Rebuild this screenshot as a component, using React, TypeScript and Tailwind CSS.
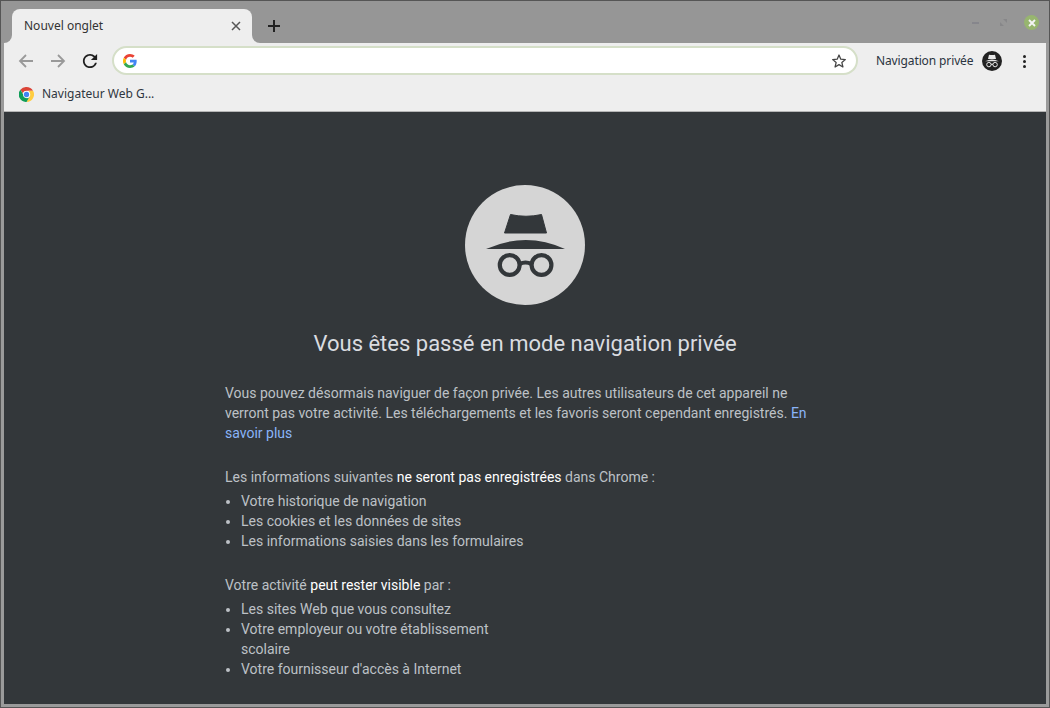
const G = () => (
  <svg width="14" height="14" viewBox="0 0 48 48">
    <path fill="#EA4335" d="M24 9.500c3.500 0 6.700 1.200 9.200 3.600l6.900-6.900C35.900 2.400 30.400 0 24 0 14.600 0 6.500 5.400 2.600 13.200l8 6.200C12.500 13.600 17.800 9.500 24 9.500z"/>
    <path fill="#4285F4" d="M46.900 24.500c0-1.600-.1-3.100-.4-4.500H24v9h12.900c-.6 3-2.200 5.500-4.700 7.200l7.700 6c4.500-4.200 7-10.300 7-17.700z"/>
    <path fill="#FBBC05" d="M10.600 28.600c-.5-1.500-.8-3-.8-4.600s.3-3.100.8-4.600l-8-6.200C.9 16.500 0 20.100 0 24s.9 7.500 2.600 10.800l8-6.200z"/>
    <path fill="#34A853" d="M24 48c6.500 0 11.900-2.100 15.900-5.800l-7.700-6c-2.100 1.400-4.900 2.300-8.200 2.300-6.200 0-11.500-4.200-13.400-9.900l-8 6.200C6.500 42.600 14.600 48 24 48z"/>
  </svg>
);

const ChromeLogo = () => (
  <svg width="15" height="15" viewBox="0 0 48 48" className="shrink-0">
    <path fill="#DB4437" d="M24 0a24 24 0 0 1 20.800 12H24a12 12 0 0 0-11.600 8.900L4.500 8.900A24 24 0 0 1 24 0z"/>
    <path fill="#FFCD40" d="M44.800 12A24 24 0 0 1 24 48l10.400-18A12 12 0 0 0 32 15.500V12z"/>
    <path fill="#0F9D58" d="M4.500 8.900l8.900 15.100L24 36a12 12 0 0 0 10.400-6L24 48A24 24 0 0 1 4.500 8.900z"/>
    <circle cx="24" cy="24" r="11" fill="#fff"/>
    <circle cx="24" cy="24" r="8.500" fill="#4285F4"/>
  </svg>
);

const Spy = ({ color }: { color: string }) => (
  <svg viewBox="0 0 120 120" className="w-full h-full">
    <path fill={color} stroke={color} strokeWidth="1" strokeLinejoin="round" d="M45.500 29.500 Q61 33 76.500 29.500 L81.500 48 L39.500 48 Z"/>
    <path fill={color} d="M21 64 Q61 46 100 64 Z"/>
    <g fill="none" stroke={color} strokeWidth="4.200">
      <circle cx="44.700" cy="80" r="9.900"/>
      <circle cx="76.500" cy="80" r="9.900"/>
      <path d="M54.500 79 Q60.500 76 66.500 79"/>
    </g>
  </svg>
);

const SpySmall = () => (
  <svg viewBox="0 0 20 20" width="20" height="20" className="shrink-0">
    <circle cx="10" cy="10" r="10" fill="#222222"/>
    <path fill="#e8e8e8" d="M7 3.700 Q10 4.400 13 3.700 L14 8 H6 Z"/>
    <path fill="#e8e8e8" d="M3.200 10.200 Q10 6.800 16.800 10.200 Z"/>
    <g fill="none" stroke="#e8e8e8" strokeWidth="1">
      <circle cx="6.900" cy="13.600" r="2.200"/>
      <circle cx="13.100" cy="13.600" r="2.200"/>
      <path d="M9 13.300 H11"/>
    </g>
  </svg>
);

export default function App() {
  return (
    <div className="w-[1050px] h-[708px] bg-[#9a9a9a] border border-[#555] flex flex-col overflow-hidden px-[3px] pb-[3px]" style={{ fontFamily: "'Noto Sans', sans-serif" }}>
      <div className="h-[42px] -mx-[3px] bg-[#969696] flex items-end pl-[11px] shrink-0 relative">
        <div className="relative w-[240px] h-[34px] bg-[#eeeeee] rounded-t-[8px] flex items-center pl-[12px] pr-[11px] justify-between text-[12px] text-[#333]">
          <div className="absolute -left-[8px] bottom-0 w-[8px] h-[8px] bg-[#eeeeee]"><div className="w-full h-full bg-[#969696] rounded-br-[8px]" /></div>
          <div className="absolute -right-[8px] bottom-0 w-[8px] h-[8px] bg-[#eeeeee]"><div className="w-full h-full bg-[#969696] rounded-bl-[8px]" /></div>
          <span>Nouvel onglet</span>
          <svg width="10" height="10" viewBox="0 0 10 10"><path d="M1 1 L9 9 M9 1 L1 9" stroke="#555" strokeWidth="1.500"/></svg>
        </div>
        <svg className="ml-[15px] mb-[10px]" width="14" height="14" viewBox="0 0 14 14"><path d="M7 1 V13 M1 7 H13" stroke="#222" strokeWidth="2"/></svg>
        <div className="absolute right-[10px] top-[14px] flex items-center">
          <div className="w-[7px] h-[2px] bg-[#86868c]" />
          <svg className="ml-[21px]" width="7" height="7" viewBox="0 0 7 7"><path d="M3 0 H7 V4 Z M0 3 L4 7 H0 Z" fill="#878789"/></svg>
          <div className="ml-[17px] w-[15px] h-[15px] rounded-full bg-[#97b56f] flex items-center justify-center">
            <svg width="8" height="8" viewBox="0 0 8 8"><path d="M1 1 L7 7 M7 1 L1 7" stroke="#f4f4f4" strokeWidth="1.900"/></svg>
          </div>
        </div>
      </div>

      <div className="h-[36px] bg-[#eeeeee] flex items-center pl-[14px] shrink-0">
        <svg width="16" height="16" viewBox="0 0 16 16" className="shrink-0"><path d="M15 8 H2 M8 2 L2 8 L8 14" fill="none" stroke="#999" strokeWidth="1.800"/></svg>
        <svg width="16" height="16" viewBox="0 0 16 16" className="ml-[16px] shrink-0"><path d="M1 8 H14 M8 2 L14 8 L8 14" fill="none" stroke="#999" strokeWidth="1.800"/></svg>
        <svg width="16" height="16" viewBox="3 3 18 18" className="ml-[16px] shrink-0"><path fill="#1f1f1f" d="M17.650 6.350A7.958 7.958 0 0 0 12 4c-4.420 0-7.990 3.580-7.990 8s3.570 8 7.990 8c3.730 0 6.840-2.550 7.730-6h-2.080A5.990 5.990 0 0 1 12 18c-3.310 0-6-2.690-6-6s2.690-6 6-6c1.660 0 3.140.690 4.220 1.780L13 11h7V4l-2.350 2.350z"/></svg>
        <div className="ml-[14px] w-[746px] h-[29px] mb-[1px] bg-white rounded-full border-2 border-[#d5dfc8] flex items-center justify-between pl-[9px] pr-[9px] shrink-0">
          <G />
          <svg width="16" height="16" viewBox="0 0 24 24"><path d="M12 3 L14.700 9.300 L21.500 9.900 L16.300 14.300 L17.900 21 L12 17.500 L6.100 21 L7.700 14.300 L2.500 9.900 L9.300 9.300 Z" fill="none" stroke="#444" strokeWidth="1.900" strokeLinejoin="round"/></svg>
        </div>
        <span className="ml-[18px] w-[97px] text-[12px] tracking-[-0.12px] text-[#2b3440] whitespace-nowrap shrink-0">Navigation privée</span>
        <div className="ml-[9px] shrink-0"><SpySmall /></div>
        <div className="ml-[21px] flex flex-col gap-[2px] shrink-0">
          <div className="w-[3px] h-[3px] rounded-full bg-[#222]" />
          <div className="w-[3px] h-[3px] rounded-full bg-[#222]" />
          <div className="w-[3px] h-[3px] rounded-full bg-[#222]" />
        </div>
      </div>

      <div className="h-[33px] bg-[#eeeeee] border-b border-[#b5b5b5] flex items-center pl-[15px] pb-[2px] shrink-0">
        <ChromeLogo />
        <span className="ml-[8px] text-[12px] text-[#2f3640]">Navigateur Web G...</span>
      </div>

      <div className="flex-1 bg-[#33373a] overflow-hidden flex flex-col items-center text-[14px] leading-[20px] text-[#bdc1c6]" style={{ fontFamily: "Roboto, sans-serif" }}>
        <div className="w-[120px] h-[120px] rounded-full bg-[#d5d5d5] mt-[73px] shrink-0"><Spy color="#33373a" /></div>
        <h1 className="mt-[23px] text-[22px] leading-[32px] font-normal text-[#dadce0]">Vous êtes passé en mode navigation privée</h1>
        <div className="w-[600px] mt-[23px] pr-[17px]">
          <p>Vous pouvez désormais naviguer de façon privée. Les autres utilisateurs de cet appareil ne verront pas votre activité. Les téléchargements et les favoris seront cependant enregistrés. <a className="text-[#8ab4f8]">En savoir plus</a></p>
          <p className="mt-[24px] whitespace-nowrap">Les informations suivantes <span className="text-white">ne seront pas enregistrées</span> dans Chrome :</p>
          <ul className="mt-[4px] list-disc pl-[16px]">
            <li>Votre historique de navigation</li>
            <li>Les cookies et les données de sites</li>
            <li>Les informations saisies dans les formulaires</li>
          </ul>
          <p className="mt-[24px]">Votre activité <span className="text-white">peut rester visible</span> par :</p>
          <ul className="mt-[4px] list-disc pl-[16px] w-[290px]">
            <li>Les sites Web que vous consultez</li>
            <li>Votre employeur ou votre établissement scolaire</li>
            <li>Votre fournisseur d'accès à Internet</li>
          </ul>
        </div>
      </div>
    </div>
  );
}
